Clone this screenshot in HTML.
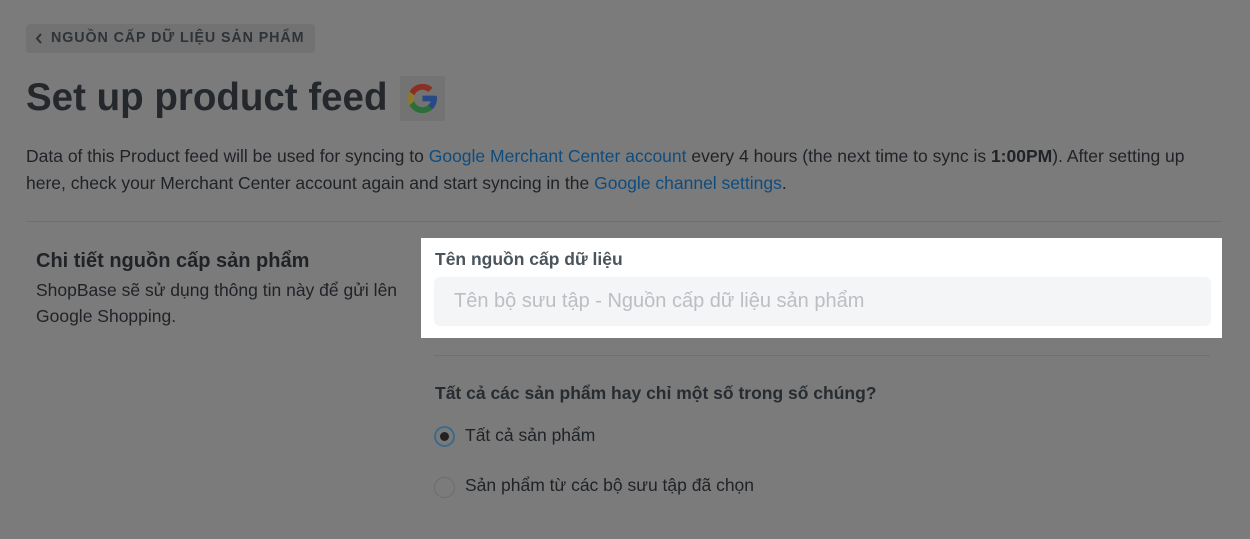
<!DOCTYPE html>
<html><head><meta charset="utf-8"><style>
body{margin:0;width:1250px;height:539px;background:#7b7b7b;font-family:"Liberation Sans",sans-serif;position:relative;overflow:hidden;color:#1f2226}
.a{position:absolute;white-space:nowrap}
.back{left:26px;top:24px;width:289px;height:29px;background:#727272;border-radius:4px;font-weight:bold;font-size:14.3px;letter-spacing:0.9px;color:#2e3338;line-height:29px;padding-left:25px;box-sizing:border-box}
h1{position:absolute;left:26px;top:74px;margin:0;font-size:38.5px;font-weight:bold;color:#24282c;line-height:48px}
.p{left:26px;top:143px;width:1190px;font-size:17.5px;line-height:26.5px;color:#1f2226;white-space:normal}
.lnk{color:#0f4c7e}
.hr{height:1px;background:#707070}
</style></head><body>
<div class="a back"><svg class="a" style="left:9px;top:9px" width="8" height="11"><path d="M6 1L2 5.5L6 10" stroke="#2e3338" stroke-width="2" fill="none"/></svg>NGUỒN CẤP DỮ LIỆU SẢN PHẨM</div>
<h1>Set up product feed</h1>
<div class="a" style="left:400px;top:76px;width:45px;height:45px;background:#737373"></div>
<svg class="a" style="left:405px;top:81px" width="35" height="35" viewBox="0 0 48 48">
<path d="M43.6 20.5H42V20H24v8h11.3C33.7 32.7 29.2 36 24 36c-6.6 0-12-5.4-12-12s5.4-12 12-12c3.1 0 5.8 1.2 8 3l5.7-5.7C34 6.1 29.3 4 24 4 12.9 4 4 12.9 4 24s8.9 20 20 20 20-8.9 20-20c0-1.3-.1-2.4-.4-3.5z" fill="#8c7a2a"/>
<path d="M6.3 14.7l6.6 4.8C14.7 15.1 19 12 24 12c3.1 0 5.8 1.2 8 3l5.7-5.7C34 6.1 29.3 4 24 4 16.3 4 9.7 8.3 6.3 14.7z" fill="#8a2f24"/>
<path d="M24 44c5.2 0 9.9-2 13.4-5.2l-6.2-5.2C29.2 35.1 26.7 36 24 36c-5.2 0-9.6-3.3-11.3-8l-6.5 5C9.5 39.6 16.2 44 24 44z" fill="#2a6e3a"/>
<path d="M43.6 20.5H42V20H24v8h11.3c-.8 2.2-2.2 4.2-4.1 5.6l6.2 5.2C37 39.2 44 34 44 24c0-1.3-.1-2.4-.4-3.5z" fill="#274a86"/>
</svg>
<div class="a p">Data of this Product feed will be used for syncing to <span class="lnk">Google Merchant Center account</span> every 4 hours (the next time to sync is <b>1:00PM</b>). After setting up here, check your Merchant Center account again and start syncing in the <span class="lnk">Google channel settings</span>.</div>
<div class="a hr" style="left:26px;top:221px;width:1196px"></div>
<div class="a" style="left:36px;top:250px;font-size:20px;font-weight:bold;color:#1f2226">Chi tiết nguồn cấp sản phẩm</div>
<div class="a" style="left:36px;top:277px;font-size:17.5px;line-height:26px;color:#1f2226;white-space:normal;width:380px">ShopBase sẽ sử dụng thông tin này để gửi lên Google Shopping.</div>
<div class="a" style="left:421px;top:238px;width:801px;height:100px;background:#fff"></div>
<div class="a" style="left:435px;top:249px;font-size:17.5px;font-weight:bold;color:#4a545c">Tên nguồn cấp dữ liệu</div>
<div class="a" style="left:434px;top:277px;width:777px;height:49px;background:#f4f5f7;border-radius:6px;font-size:20px;color:#bbbec3;line-height:49px;padding-left:20px;box-sizing:border-box">Tên bộ sưu tập - Nguồn cấp dữ liệu sản phẩm</div>
<div class="a hr" style="left:434px;top:355px;width:776px"></div>
<div class="a" style="left:435px;top:383px;font-size:17.5px;font-weight:bold;color:#272c31">Tất cả các sản phẩm hay chỉ một số trong số chúng?</div>
<div class="a" style="left:434px;top:426px;width:21px;height:21px;border-radius:50%;border:2px solid #3f6a87;background:#7a7a7a;box-sizing:border-box"></div>
<div class="a" style="left:440px;top:432px;width:9px;height:9px;border-radius:50%;background:#222"></div>
<div class="a" style="left:465px;top:425px;font-size:17.5px;color:#1f2226">Tất cả sản phẩm</div>
<div class="a" style="left:434px;top:477px;width:21px;height:21px;border-radius:50%;border:1px solid #6c6c6c;background:#7b7b7b;box-sizing:border-box"></div>
<div class="a" style="left:465px;top:475px;font-size:17.5px;color:#1f2226">Sản phẩm từ các bộ sưu tập đã chọn</div>
</body></html>
